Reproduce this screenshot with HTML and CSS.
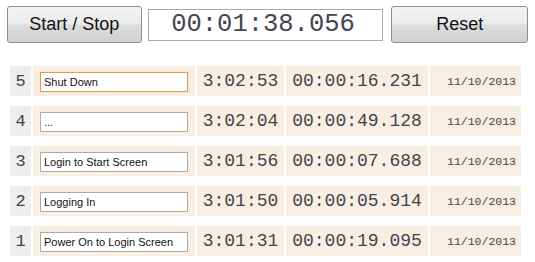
FILE: index.html
```html
<!DOCTYPE html>
<html lang="en">
<head>
    <meta charset="UTF-8">
    <meta name="viewport" content="width=device-width, initial-scale=1.0">
    <title>Lap Timer</title>
    <link rel="stylesheet" href="styles.css">
</head>
<body>
    <div class="controls">
        <button class="btn start-btn">Start / Stop</button>
        <div class="clock">00:01:38.056</div>
        <button class="btn reset-btn">Reset</button>
    </div>

    <table class="laps">
        <tr>
            <td class="num">5</td>
            <td class="name"><input type="text" class="focused" value="Shut Down"></td>
            <td class="time">3:02:53</td>
            <td class="dur">00:00:16.231</td>
            <td class="date">11/10/2013</td>
        </tr>
        <tr>
            <td class="num">4</td>
            <td class="name"><input type="text" value="..."></td>
            <td class="time">3:02:04</td>
            <td class="dur">00:00:49.128</td>
            <td class="date">11/10/2013</td>
        </tr>
        <tr>
            <td class="num">3</td>
            <td class="name"><input type="text" value="Login to Start Screen"></td>
            <td class="time">3:01:56</td>
            <td class="dur">00:00:07.688</td>
            <td class="date">11/10/2013</td>
        </tr>
        <tr>
            <td class="num">2</td>
            <td class="name"><input type="text" value="Logging In"></td>
            <td class="time">3:01:50</td>
            <td class="dur">00:00:05.914</td>
            <td class="date">11/10/2013</td>
        </tr>
        <tr>
            <td class="num">1</td>
            <td class="name"><input type="text" value="Power On to Login Screen"></td>
            <td class="time">3:01:31</td>
            <td class="dur">00:00:19.095</td>
            <td class="date">11/10/2013</td>
        </tr>
    </table>
</body>
</html>
```

FILE: styles.css
```css
body {
    margin: 0;
    padding: 6px 7px 0 8px;
    background-color: #fff;
    color: #222;
    font-family: "Liberation Mono", "Courier New", monospace;
}
.controls {
    display: flex;
    align-items: center;
    margin-left: -1px;
}
.btn {
    height: 37px;
    border: 1px solid #8e8e8e;
    border-radius: 3px;
    background: linear-gradient(#f3f3f3 0%, #ebebeb 48%, #dddddd 52%, #d0d0d0 100%);
    font-family: "Liberation Sans", Arial, sans-serif;
    font-size: 18px;
    color: #111;
    padding: 0;
    cursor: pointer;
}
.start-btn {
    width: 136px;
}
.reset-btn {
    width: 138px;
    margin-left: 8px;
}
.clock {
    width: 231px;
    height: 30px;
    margin-left: 6px;
    border: 1px solid #aaa;
    font-size: 25.5px;
    line-height: 30px;
    text-align: center;
    color: #44444f;
    padding-right: 5px;
    box-sizing: content-box;
}
.laps {
    border-collapse: separate;
    border-spacing: 2px 10px;
    margin-top: 13px;
    table-layout: fixed;
}
.laps tr {
    height: 30px;
}
.laps td {
    padding: 0;
    background-color: #f9eee4;
    vertical-align: middle;
    color: #44444f;
}
.laps .num {
    width: 21px;
    background-color: #eeeeee;
    text-align: center;
    font-size: 17px;
    color: #444;
}
.laps .name {
    width: 148px;
    padding: 6px 7px 4px;
}
.name input {
    display: block;
    width: 148px;
    height: 20px;
    box-sizing: border-box;
    margin: 0;
    padding: 0 3px;
    border: 1px solid #aaa;
    background-color: #fff;
    font-family: "Liberation Sans", Arial, sans-serif;
    font-size: 11px;
    color: #111;
}
.name input.focused {
    border-color: #dca04a;
    box-shadow: 0 0 1px #e8b060;
}
.laps .time {
    width: 87px;
    text-align: center;
    font-size: 18px;
}
.laps .dur {
    width: 142px;
    text-align: center;
    font-size: 18px;
}
.laps .date {
    width: 86px;
    padding-right: 5px;
    text-align: right;
    font-size: 11.5px;
}
```
